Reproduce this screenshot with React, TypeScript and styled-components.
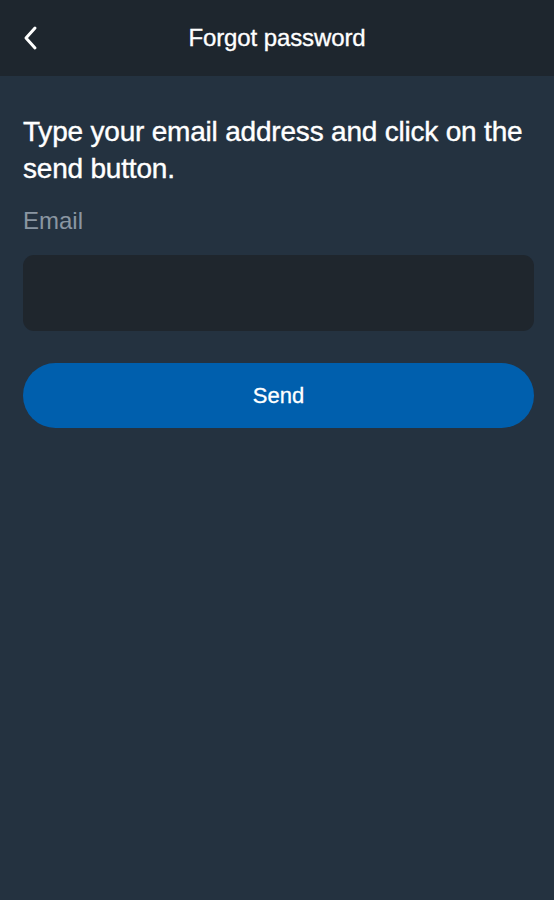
import styled, { createGlobalStyle } from 'styled-components';

const GlobalStyle = createGlobalStyle`
  html, body {
    margin: 0;
    padding: 0;
    background: #243240;
  }
  body {
    font-family: "Liberation Sans", Arial, sans-serif;
  }
`;

const Screen = styled.div`
  width: 554px;
  min-height: 900px;
  background: #243240;
  display: flex;
  flex-direction: column;
`;

const Header = styled.header`
  height: 76px;
  background: #1e262e;
  display: grid;
  grid-template-columns: 60px 1fr 60px;
  align-items: center;
`;

const BackButton = styled.button`
  background: none;
  border: none;
  padding: 0 0 0 21px;
  height: 40px;
  display: flex;
  align-items: center;
  cursor: pointer;
`;

const Title = styled.h1`
  margin: 0;
  text-align: center;
  color: #ffffff;
  font-size: 24px;
  font-weight: 400;
  letter-spacing: -0.1px;
  -webkit-text-stroke: 0.35px #ffffff;
`;

const Content = styled.main`
  padding: 37px 20px 0 23px;
  display: flex;
  flex-direction: column;
`;

const Intro = styled.p`
  margin: 0;
  color: #ffffff;
  font-size: 28px;
  line-height: 37px;
  letter-spacing: -0.2px;
  -webkit-text-stroke: 0.4px #ffffff;
`;

const Label = styled.label`
  margin-top: 22px;
  color: #8a96a2;
  font-size: 24px;
  line-height: 24px;
`;

const Input = styled.input`
  margin-top: 22px;
  height: 76px;
  border: none;
  border-radius: 11px;
  background: #1f262d;
  color: #ffffff;
  font-family: inherit;
  font-size: 20px;
  padding: 0 18px;
  box-sizing: border-box;
  outline: none;
`;

const SendButton = styled.button`
  margin-top: 32px;
  height: 65px;
  border: none;
  border-radius: 33px;
  background: #005fad;
  color: #ffffff;
  font-family: inherit;
  font-size: 22px;
  -webkit-text-stroke: 0.3px #ffffff;
  cursor: pointer;
`;

export default function App() {
  return (
    <>
      <GlobalStyle />
      <Screen>
        <Header>
          <BackButton aria-label="Back">
            <svg width="18" height="26" viewBox="0 0 18 26" fill="none">
              <path d="M14 3 L5 13 L14 23" stroke="#ffffff" strokeWidth="3" strokeLinecap="round" strokeLinejoin="round" />
            </svg>
          </BackButton>
          <Title>Forgot password</Title>
          <span />
        </Header>
        <Content>
          <Intro>Type your email address and click on the send button.</Intro>
          <Label htmlFor="email">Email</Label>
          <Input id="email" type="email" />
          <SendButton>Send</SendButton>
        </Content>
      </Screen>
    </>
  );
}
